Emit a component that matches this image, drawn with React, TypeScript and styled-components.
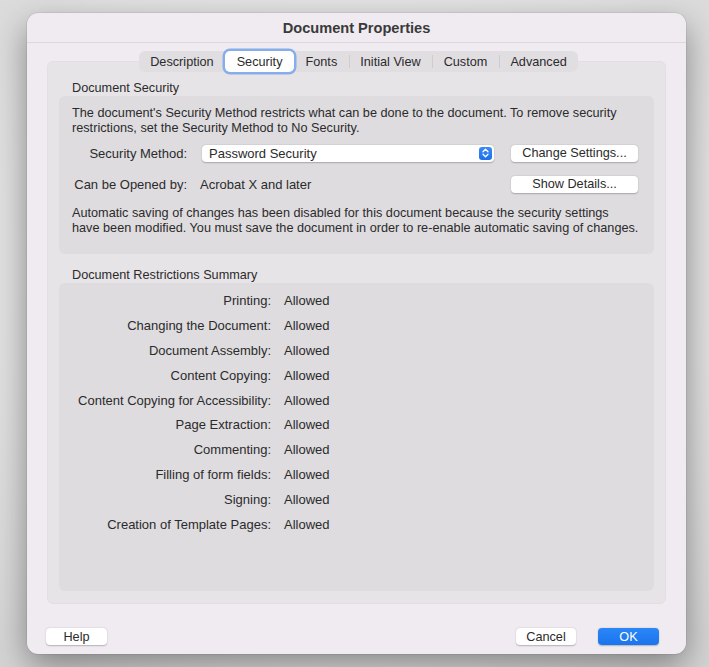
import React from 'react'
import styled, { createGlobalStyle, css } from 'styled-components'

const GlobalStyle = createGlobalStyle`
  html, body {
    margin: 0;
    padding: 0;
    width: 709px;
    height: 667px;
    overflow: hidden;
    background: radial-gradient(ellipse at 50% 40%, #ececec 0%, #e2e2e2 70%, #d4d4d4 100%);
    font-family: "Liberation Sans", Arial, sans-serif;
    color: #2b2b2b;
  }
`

const Window = styled.div`
  position: absolute;
  left: 27px;
  top: 13px;
  width: 659px;
  height: 641px;
  background: #efebf0;
  border-radius: 11px;
  box-shadow: 0 12px 34px rgba(0, 0, 0, 0.42), 0 0 0 0.5px rgba(0, 0, 0, 0.12);
  display: flex;
  flex-direction: column;
`

const TitleBar = styled.div`
  height: 29px;
  border-bottom: 1px solid #dbd7db;
  display: flex;
  align-items: center;
  justify-content: center;
  font-size: 14.6px;
  font-weight: bold;
  color: #3a3a3a;
`

const Body = styled.div`
  flex: 1;
  display: flex;
  flex-direction: column;
  padding: 8px 20px 0 20px;
  position: relative;
`

const TabBar = styled.div`
  align-self: center;
  display: flex;
  align-items: center;
  height: 21px;
  background: #e1dee2;
  border-radius: 6px;
  position: relative;
  z-index: 1;
  margin-left: 4px;
`

const Tab = styled.div<{ $active?: boolean; $sep?: boolean }>`
  height: 21px;
  padding: 0 11.5px;
  display: flex;
  align-items: center;
  font-size: 12.7px;
  color: #2b2b2b;
  position: relative;
  ${({ $sep }) =>
    $sep &&
    css`
      &::before {
        content: '';
        position: absolute;
        left: 0;
        top: 4px;
        bottom: 4px;
        width: 1px;
        background: #cfcbcf;
      }
    `}
  ${({ $active }) =>
    $active &&
    css`
      background: #ffffff;
      border-radius: 5px;
      box-shadow: 0 0 0 2.5px #86aeea, 0 1px 1px rgba(0, 0, 0, 0.15);
    `}
`

const ContentBox = styled.div`
  margin-top: -11px;
  height: 543px;
  background: #e7e4e8;
  border-radius: 6px;
  border: 1px solid #e2dfe3;
  padding: 14px 11px 0 11px;
  box-sizing: border-box;
  display: flex;
  flex-direction: column;
`

const SectionLabel = styled.div<{ $top: number }>`
  font-size: 12.7px;
  padding-left: 13px;
  height: 15px;
  line-height: 15px;
  margin-top: ${({ $top }) => $top}px;
`

const Group = styled.div<{ $height: number; $padTop: number }>`
  height: ${({ $height }) => $height}px;
  box-sizing: border-box;
  background: #dedcdf;
  border-radius: 6px;
  padding: ${({ $padTop }) => $padTop}px 13px 0 13px;
  display: flex;
  flex-direction: column;
`

const Paragraph = styled.p<{ $top?: number }>`
  margin: ${({ $top }) => $top ?? 0}px 0 0 0;
  font-size: 12.7px;
  line-height: 15px;
  white-space: nowrap;
  color: #2b2b2b;
`

const FormRow = styled.div<{ $top: number }>`
  display: grid;
  grid-template-columns: 115px 292px 1fr;
  align-items: center;
  column-gap: 15px;
  margin-top: ${({ $top }) => $top}px;
  height: 18px;
`

const FieldLabel = styled.span`
  font-size: 13px;
  line-height: 15px;
  text-align: right;
  white-space: nowrap;
  color: #2b2b2b;
`

const Value = styled.span<{ $shift?: number }>`
  font-size: 13px;
  line-height: 15px;
  color: #2b2b2b;
  margin-left: ${({ $shift }) => $shift ?? 0}px;
`

const Select = styled.div`
  height: 17px;
  background: #ffffff;
  border-radius: 4px;
  box-shadow: 0 0.5px 1.5px rgba(0, 0, 0, 0.25);
  display: flex;
  align-items: center;
  justify-content: space-between;
  padding: 0 2px 0 7px;
  font-size: 13px;
`

const Stepper = styled.span`
  width: 13px;
  height: 13px;
  border-radius: 3px;
  background: linear-gradient(#3b8bf7, #1d6fea);
  display: flex;
  align-items: center;
  justify-content: center;
`

const Button = styled.button<{ $primary?: boolean; $width: number }>`
  width: ${({ $width }) => $width}px;
  height: 17px;
  border: none;
  border-radius: 4px;
  background: ${({ $primary }) => ($primary ? 'linear-gradient(#2b86f7, #1a74ee)' : '#ffffff')};
  color: ${({ $primary }) => ($primary ? '#ffffff' : '#2b2b2b')};
  box-shadow: 0 0.5px 1.5px rgba(0, 0, 0, 0.25);
  font-family: "Liberation Sans", Arial, sans-serif;
  font-size: 12.7px;
  padding: 0;
  display: flex;
  align-items: center;
  justify-content: center;
`

const RightButton = styled(Button)`
  justify-self: end;
  margin-right: 3px;
`

const Restrictions = styled.div`
  display: grid;
  grid-template-columns: 199px 1fr;
  column-gap: 13px;
  row-gap: 9.9px;
`

const Footer = styled.div`
  display: flex;
  align-items: center;
  height: 17px;
  margin-top: 24px;
  gap: 22px;
  margin-left: -1px;
  margin-right: 7px;
`

const Spacer = styled.div`
  flex: 1;
`

const restrictions = [
  'Printing:',
  'Changing the Document:',
  'Document Assembly:',
  'Content Copying:',
  'Content Copying for Accessibility:',
  'Page Extraction:',
  'Commenting:',
  'Filling of form fields:',
  'Signing:',
  'Creation of Template Pages:',
]

export default function App() {
  return (
    <>
      <GlobalStyle />
      <Window>
        <TitleBar>Document Properties</TitleBar>
        <Body>
          <TabBar>
            <Tab>Description</Tab>
            <Tab $active>Security</Tab>
            <Tab>Fonts</Tab>
            <Tab $sep>Initial View</Tab>
            <Tab $sep>Custom</Tab>
            <Tab $sep>Advanced</Tab>
          </TabBar>
          <ContentBox>
            <SectionLabel $top={5}>Document Security</SectionLabel>
            <Group $height={158} $padTop={10}>
              <Paragraph>
                The document's Security Method restricts what can be done to the document. To remove security
                <br />
                restrictions, set the Security Method to No Security.
              </Paragraph>
              <FormRow $top={8}>
                <FieldLabel>Security Method:</FieldLabel>
                <Select>
                  Password Security
                  <Stepper>
                    <svg width="7" height="10" viewBox="0 0 7 10" fill="none">
                      <path d="M1 3.8 L3.5 1.3 L6 3.8" stroke="#fff" strokeWidth="1.3" strokeLinecap="round" strokeLinejoin="round" />
                      <path d="M1 6.2 L3.5 8.7 L6 6.2" stroke="#fff" strokeWidth="1.3" strokeLinecap="round" strokeLinejoin="round" />
                    </svg>
                  </Stepper>
                </Select>
                <RightButton $width={127}>Change Settings...</RightButton>
              </FormRow>
              <FormRow $top={13}>
                <FieldLabel>Can be Opened by:</FieldLabel>
                <Value $shift={-2}>Acrobat X and later</Value>
                <RightButton $width={127}>Show Details...</RightButton>
              </FormRow>
              <Paragraph $top={13}>
                Automatic saving of changes has been disabled for this document because the security settings
                <br />
                have been modified. You must save the document in order to re-enable automatic saving of changes.
              </Paragraph>
            </Group>
            <SectionLabel $top={14}>Document Restrictions Summary</SectionLabel>
            <Group $height={308} $padTop={10}>
              <Restrictions>
                {restrictions.map((r) => (
                  <React.Fragment key={r}>
                    <FieldLabel>{r}</FieldLabel>
                    <Value>Allowed</Value>
                  </React.Fragment>
                ))}
              </Restrictions>
            </Group>
          </ContentBox>
          <Footer>
            <Button $width={61}>Help</Button>
            <Spacer />
            <Button $width={60}>Cancel</Button>
            <Button $width={61} $primary>
              OK
            </Button>
          </Footer>
        </Body>
      </Window>
    </>
  )
}
